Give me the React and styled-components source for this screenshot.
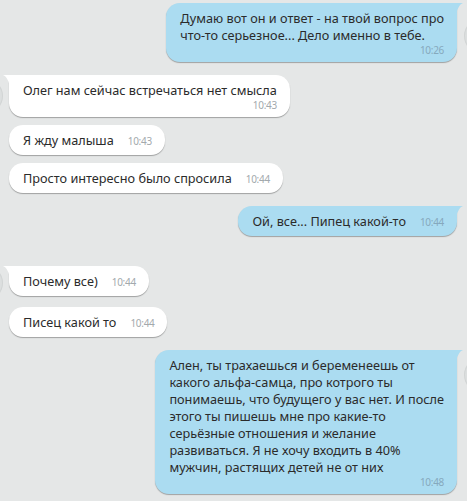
import React from 'react';
import styled, { createGlobalStyle } from 'styled-components';

const Global = createGlobalStyle`
  html, body { margin: 0; padding: 0; background: #e5e7e7; }
  body { font-family: "Segoe UI", "Noto Sans", sans-serif; }
`;

const Chat = styled.div`
  display: flex;
  flex-direction: column;
  width: 467px;
  height: 501px;
  box-sizing: border-box;
  padding: 3px 10px 0 9px;
  overflow: hidden;
  background: #e5e7e7;
`;

const Row = styled.div`
  display: flex;
  justify-content: ${(p) => (p.$out ? 'flex-end' : 'flex-start')};
  align-items: flex-start;
  margin-top: ${(p) => p.$gap}px;
`;

const Avatar = styled.div`
  flex: none;
  width: 34px;
  height: 34px;
  border-radius: 50%;
  background: #dcdfdf;
  box-shadow: inset 0 0 0 1px #d2d5d5;
  margin-top: ${(p) => p.$top}px;
  ${(p) => (p.$out ? 'margin-left: 7px; margin-right: -41px;' : 'margin-right: 6px; margin-left: -40px;')}
`;

const Bubble = styled.div`
  position: relative;
  display: flex;
  flex-direction: ${(p) => (p.$stack ? 'column' : 'row')};
  align-items: ${(p) => (p.$stack ? 'stretch' : 'baseline')};
  background: ${(p) => (p.$out ? '#abdcf1' : '#ffffff')};
  color: #2b2b2b;
  border-radius: 14px;
  ${(p) => (p.$tail ? (p.$out ? 'border-top-right-radius: 0;' : 'border-top-left-radius: 0;') : '')}
  box-shadow: 0 1px 1px rgba(0, 0, 0, 0.3);
  padding: 7px 13px 6px 14px;
  font-size: 12.7px;
  line-height: 17px;
`;

const Text = styled.div`
  white-space: nowrap;
`;

const Line = styled.div``;

const Time = styled.span`
  font-size: 10px;
  line-height: 12px;
  letter-spacing: -0.3px;
  color: ${(p) => (p.$out ? '#86a9bd' : '#a3a9ad')};
  white-space: nowrap;
  ${(p) => (p.$stack ? 'align-self: flex-end;' : 'margin-left: 14px;')}
`;

const Tail = styled.svg`
  position: absolute;
  top: 0;
  width: 7px;
  height: 12px;
  ${(p) => (p.$out ? 'right: -6px;' : 'left: -6px; transform: scaleX(-1);')}
`;

const messages = [
  { out: true, tail: true, gap: 0, stack: true, avatar: 16, time: '10:26',
    lines: ['Думаю вот он и ответ - на твой вопрос про', 'что-то серьезное... Дело именно в тебе.'] },
  { out: false, tail: true, gap: 13, stack: true, avatar: 4, time: '10:43',
    lines: ['Олег нам сейчас встречаться нет смысла'] },
  { out: false, gap: 8, time: '10:43', lines: ['Я жду малыша'] },
  { out: false, gap: 8, time: '10:44', lines: ['Просто интересно было спросила'] },
  { out: true, tail: true, gap: 13, time: '10:44', lines: ['Ой, все... Пипец какой-то'] },
  { out: false, tail: true, gap: 30, avatar: 0, time: '10:44', lines: ['Почему все)'] },
  { out: false, gap: 7, time: '10:44', lines: ['Писец какой то'] },
  { out: true, tail: true, gap: 13, stack: true, avatar: 8, time: '10:48',
    lines: [
      'Ален, ты трахаешься и беременеешь от',
      'какого альфа-самца, про котрого ты',
      'понимаешь, что будущего у вас нет. И после',
      'этого ты пишешь мне про какие-то',
      'серьёзные отношения и желание',
      'развиваться. Я не хочу входить в 40%',
      'мужчин, растящих детей не от них',
    ] },
];

function Message({ m }) {
  const color = m.out ? '#abdcf1' : '#ffffff';
  return (
    <Row $out={m.out} $gap={m.gap}>
      {!m.out && m.avatar !== undefined && <Avatar $top={m.avatar} />}
      <Bubble $out={m.out} $tail={m.tail} $stack={m.stack}>
        {m.tail && (
          <Tail $out={m.out} viewBox="0 0 7 12">
            <path d="M0 0 H7 C4.6 0.8 1.6 4 0 12 Z" fill={color} />
          </Tail>
        )}
        <Text>
          {m.lines.map((l, i) => (
            <Line key={i}>{l}</Line>
          ))}
        </Text>
        <Time $out={m.out} $stack={m.stack}>{m.time}</Time>
      </Bubble>
      {m.out && m.avatar !== undefined && <Avatar $out $top={m.avatar} />}
    </Row>
  );
}

export default function App() {
  return (
    <>
      <Global />
      <Chat>
        {messages.map((m, i) => (
          <Message key={i} m={m} />
        ))}
      </Chat>
    </>
  );
}
